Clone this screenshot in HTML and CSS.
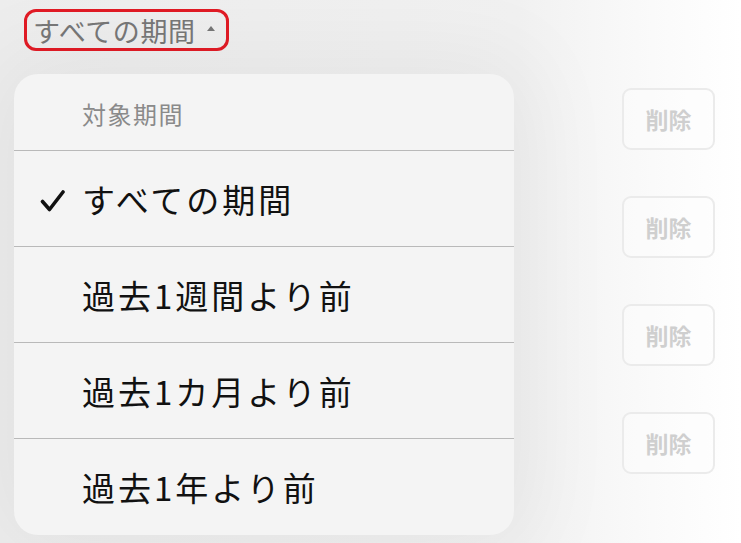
FILE: index.html
```html
<!DOCTYPE html>
<html lang="ja">
<head>
<meta charset="utf-8">
<link rel="stylesheet" href="styles.css">
</head>
<body>
<div class="page">
  <header class="top">
    <button class="period-toggle">
      <span class="period-label">すべての期間</span>
      <svg class="caret" width="10" height="6" viewBox="0 0 10 6"><path d="M1 6 L5 1 L9 6 Z" fill="#777"/></svg>
    </button>
  </header>
  <main class="content">
    <div class="menu">
      <div class="menu-head">対象期間</div>
      <div class="menu-item selected">
        <svg class="check" width="26" height="24" viewBox="0 0 26 24"><path d="M2.5 12.5 L9.5 20.5 L23 3" fill="none" stroke="#111" stroke-width="3.6" stroke-linecap="round" stroke-linejoin="round"/></svg>
        <span>すべての期間</span>
      </div>
      <div class="menu-item"><span>過去1週間より前</span></div>
      <div class="menu-item"><span>過去1カ月より前</span></div>
      <div class="menu-item"><span>過去1年より前</span></div>
    </div>
    <div class="actions">
      <button class="del">削除</button>
      <button class="del">削除</button>
      <button class="del">削除</button>
      <button class="del">削除</button>
    </div>
  </main>
</div>
</body>
</html>
```

FILE: styles.css
```css
html, body {
  margin: 0;
  padding: 0;
  background: #ffffff;
}
body {
  font-family: "Noto Sans CJK JP", "Noto Sans", sans-serif;
  width: 741px;
  height: 543px;
  overflow: hidden;
}
.page {
  display: flex;
  flex-direction: column;
  height: 543px;
  background: linear-gradient(90deg, #ededed 0%, #f1f1f1 70%, #fafafa 88%, #ffffff 100%);
}
.top {
  padding: 9px 0 0 24px;
  height: 74px;
  box-sizing: border-box;
}
.period-toggle {
  display: inline-flex;
  align-items: center;
  gap: 10px;
  height: 42px;
  box-sizing: border-box;
  padding: 0 10px 0 6px;
  border: 3px solid #e11b25;
  border-radius: 12px;
  background: transparent;
  font-family: inherit;
  color: #777;
  font-size: 27px;
  line-height: 1;
}
.period-label {
  letter-spacing: 0.6px;
}
.caret {
  margin-top: -4px;
}
.content {
  display: flex;
  align-items: flex-start;
  padding-left: 14px;
  padding-right: 26px;
}
.menu {
  width: 500px;
  height: 461px;
  background: #f4f4f4;
  border-radius: 24px;
  box-shadow: 0 0 90px 20px rgba(0, 0, 0, 0.05);
  overflow: hidden;
}
.menu-head {
  height: 77px;
  box-sizing: border-box;
  border-bottom: 1px solid #b9b9b9;
  padding-left: 68px;
  display: flex;
  align-items: center;
  padding-top: 3px;
  font-size: 24px;
  color: #8a8a8a;
  letter-spacing: 1.5px;
}
.menu-item {
  height: 96px;
  box-sizing: border-box;
  border-bottom: 1px solid #b9b9b9;
  display: flex;
  align-items: center;
  padding-left: 68px;
  font-size: 33px;
  color: #111;
  letter-spacing: 3px;
  position: relative;
}
.menu-item:last-child {
  border-bottom: none;
}
.check {
  position: absolute;
  left: 26px;
  top: 38px;
}
.actions {
  margin-left: auto;
  padding-top: 14px;
  display: flex;
  flex-direction: column;
  gap: 46px;
}
.del {
  width: 93px;
  height: 62px;
  box-sizing: border-box;
  border: 2px solid #ebebeb;
  border-radius: 9px;
  background: rgba(255, 255, 255, 0.3);
  font-family: inherit;
  font-size: 23px;
  font-weight: 700;
  color: #cfcfcf;
}
```
